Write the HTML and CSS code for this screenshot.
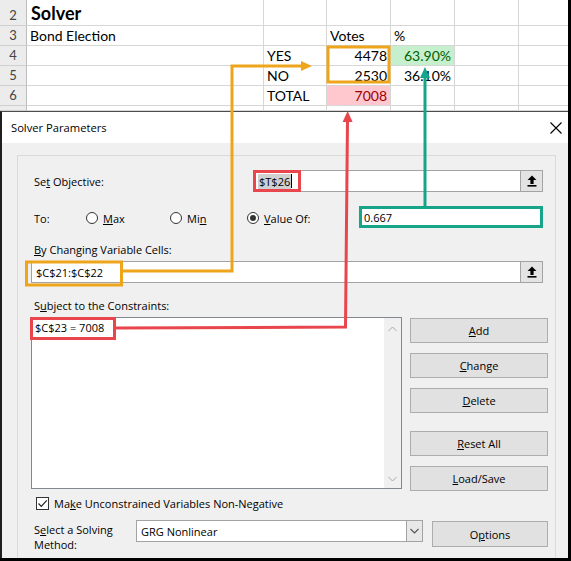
FILE: index.html
```html
<!DOCTYPE html>
<html>
<head>
<meta charset="utf-8">
<title>Solver Parameters</title>
<link rel="stylesheet" href="styles.css">
</head>
<body>
<div class="screen">
  <div class="sheet">
    <div class="hd">2</div><div class="c title">Solver</div><div class="c"></div><div class="c"></div><div class="c"></div><div class="c"></div><div class="c last"></div>
    <div class="hd">3</div><div class="c">Bond Election</div><div class="c"></div><div class="c">Votes</div><div class="c">%</div><div class="c"></div><div class="c last"></div>
    <div class="hd">4</div><div class="c"></div><div class="c">YES</div><div class="c num">4478</div><div class="c num good">63.90%</div><div class="c"></div><div class="c last"></div>
    <div class="hd">5</div><div class="c"></div><div class="c">NO</div><div class="c num">2530</div><div class="c num">36.10%</div><div class="c"></div><div class="c last"></div>
    <div class="hd">6</div><div class="c"></div><div class="c">TOTAL</div><div class="c num bad">7008</div><div class="c"></div><div class="c"></div><div class="c last"></div>
    <div class="hd"></div><div class="c"></div><div class="c"></div><div class="c"></div><div class="c"></div><div class="c"></div><div class="c last"></div>
  </div>

  <div class="dialog">
    <div class="titlebar">
      <span>Solver Parameters</span>
      <svg class="close" width="12" height="12" viewBox="0 0 12 12"><path d="M0.5 0.5 L11.5 11.5 M11.5 0.5 L0.5 11.5" stroke="#000" stroke-width="1.1" fill="none"/></svg>
    </div>
    <div class="body">
      <div class="group">
        <div class="row h22 obj">
          <span class="lbl w222">Se<u>t</u> Objective:</span>
          <div class="field w290"><span class="sel">$T$26</span><span class="caret"></span>
            <span class="pick"><svg width="10" height="12" viewBox="0 0 10 12"><path d="M5 0.5 L9.5 5 L6.6 5 L6.6 9 L3.4 9 L3.4 5 L0.5 5 Z" fill="#000"/><rect x="0.5" y="10" width="9" height="1.6" fill="#000"/></svg></span>
          </div>
        </div>
        <div class="row h22 to">
          <span class="lbl w55 lower">To:</span>
          <span class="opt w84 lower"><span class="radio"></span><span><u>M</u>ax</span></span>
          <span class="opt w77 lower"><span class="radio"></span><span>Mi<u>n</u></span></span>
          <span class="opt w112 lower"><span class="radio on"></span><span><u>V</u>alue Of:</span></span>
          <div class="field w184">0.667</div>
        </div>
        <div class="lbl caption c1"><u>B</u>y Changing Variable Cells:</div>
        <div class="row h22 gap3">
          <div class="field w512">$C$21:$C$22
            <span class="pick"><svg width="10" height="12" viewBox="0 0 10 12"><path d="M5 0.5 L9.5 5 L6.6 5 L6.6 9 L3.4 9 L3.4 5 L0.5 5 Z" fill="#000"/><rect x="0.5" y="10" width="9" height="1.6" fill="#000"/></svg></span>
          </div>
        </div>
        <div class="lbl caption c2">S<u>u</u>bject to the Constraints:</div>
        <div class="lists">
          <div class="listbox">
            <div class="items"><div class="item">$C$23 = 7008</div></div>
            <div class="scroll">
              <svg width="9" height="6" viewBox="0 0 9 6"><polyline points="0.5,5 4.5,1 8.5,5" fill="none" stroke="#a8a8a8" stroke-width="1"/></svg>
              <svg width="9" height="6" viewBox="0 0 9 6"><polyline points="0.5,1 4.5,5 8.5,1" fill="none" stroke="#a8a8a8" stroke-width="1"/></svg>
            </div>
          </div>
          <div class="btns">
            <div class="btn"><span><u>A</u>dd</span></div>
            <div class="btn g10"><span><u>C</u>hange</span></div>
            <div class="btn g10"><span><u>D</u>elete</span></div>
            <div class="btn g18"><span><u>R</u>eset All</span></div>
            <div class="btn g10"><span><u>L</u>oad/Save</span></div>
          </div>
        </div>
        <div class="row check-row">
          <span class="check"><svg width="11" height="11" viewBox="0 0 11 11"><polyline points="1.5,5.5 4.3,8.3 9.8,2.3" fill="none" stroke="#222" stroke-width="1.2"/></svg></span>
          <span>Ma<u>k</u>e Unconstrained Variables Non-Negative</span>
        </div>
        <div class="row method">
          <span class="lbl mlabel">S<u>e</u>lect a Solving<br>Method:</span>
          <div class="dropdown"><span>GRG Nonlinear</span>
            <span class="ddbtn"><svg width="9" height="6" viewBox="0 0 9 6"><polyline points="0.5,1 4.5,5 8.5,1" fill="none" stroke="#555" stroke-width="1.1"/></svg></span>
          </div>
          <div class="btn optbtn"><span>O<u>p</u>tions</span></div>
        </div>
      </div>
    </div>
  </div>

  <svg class="annot" width="571" height="561" viewBox="0 0 571 561">
    <g fill="none" stroke-width="3">
      <rect x="328" y="47" width="61" height="35" stroke="#eea51c"/>
      <rect x="26.5" y="262" width="95" height="23" stroke="#eea51c"/>
      <polyline points="123,271 232,271 232,66 302,66" stroke="#eea51c"/>
      <rect x="254.5" y="171.5" width="45" height="19" stroke="#e8464c"/>
      <rect x="31.5" y="318.5" width="83" height="20" stroke="#e8464c"/>
      <polyline points="116,328 345.5,327 347.5,120" stroke="#e8464c"/>
      <rect x="360.5" y="207.5" width="181" height="19" stroke="#17a589"/>
      <polyline points="425,206 425,76" stroke="#17a589"/>
    </g>
    <polygon points="312,66 301,61 301,71" fill="#eea51c"/>
    <polygon points="347.6,111 342.6,122 352.6,122" fill="#e8464c"/>
    <polygon points="425,67 420,78 430,78" fill="#17a589"/>
  </svg>
</div>
</body>
</html>
```

FILE: styles.css
```css
* { box-sizing: border-box; }
body { margin: 0; background: #fff; }

.screen {
  position: relative;
  width: 571px;
  height: 561px;
  overflow: hidden;
  background: #fff;
  border-right: 3px solid #000;
  border-bottom: 3px solid #000;
  display: flex;
  flex-direction: column;
}

/* spreadsheet */
.sheet {
  display: grid;
  grid-template-columns: 27px 237px 63px 64px 64px 64px 49px;
  grid-template-rows: 26px 20px 20px 20px 20px 5px;
  font-family: Lato, "Liberation Sans", sans-serif;
  font-size: 14px;
  color: #000;
}
.sheet > div {
  border-right: 1px solid #d6d6d6;
  border-bottom: 1px solid #d6d6d6;
  display: flex;
  align-items: flex-end;
  padding: 0 3px 1px 3px;
  line-height: 17px;
  white-space: nowrap;
}
.sheet .hd {
  background: #ececec;
  border-right-color: #bdbdbd;
  border-bottom-color: #cfcfcf;
  justify-content: center;
  color: #444;
  font-size: 13px;
}
.sheet .title { font-weight: 700; font-size: 18px; line-height: 22px; padding-left: 4px; }
.sheet .num { justify-content: flex-end; }
.sheet .good { background: #c6efce; color: #006100; }
.sheet .bad { background: #ffc7ce; color: #9c0006; }
.sheet .last { border-right: none; }

/* dialog */
.dialog {
  flex: 1;
  min-height: 0;
  display: flex;
  flex-direction: column;
  border-top: 1px solid #4d4d4d;
  border-left: 2px solid #1f1f1f;
  font-family: "Open Sans", "Noto Sans", sans-serif;
  font-size: 11px;
  color: #000;
}
.titlebar {
  height: 31px;
  background: #fff;
  display: flex;
  align-items: center;
  justify-content: space-between;
  padding: 0 6px 0 9px;
  font-size: 11.2px;
}
.close { display: block; }
.body {
  flex: 1;
  min-height: 0;
  background: #f0f0f0;
  padding: 12px 12px 0 15px;
  display: flex;
  flex-direction: column;
}
.group {
  flex: 1;
  border: 1px solid #dadada;
  border-bottom: none;
  padding: 14px 6px 0 13px;
  display: flex;
  flex-direction: column;
}

.row { display: flex; align-items: center; }
.h22 { height: 22px; }
.lbl { padding-left: 3px; white-space: nowrap; }
.w222 { width: 222px; }
.w55 { width: 55px; }
.to { margin-top: 14px; }
.lower { position: relative; top: 1px; }
.gap3 { margin-top: 3px; }
.caption { height: 16px; line-height: 16px; }
.c1 { margin-top: 14px; }
.c2 { margin-top: 15px; }

.field {
  height: 22px;
  border: 1px solid #a3a3a3;
  background: #fff;
  display: flex;
  align-items: center;
  padding-left: 4px;
  white-space: nowrap;
}
.w290 { width: 290px; }
.w184 { width: 184px; }
.w512 { width: 512px; }
.sel { background: #d0d0d0; padding: 0 1px; line-height: 15px; }
.caret { width: 1px; height: 14px; background: #000; }
.pick {
  margin: -1px -1px -1px auto;
  width: 23px;
  height: 22px;
  border: 1px solid #a3a3a3;
  background: #e3e3e3;
  display: flex;
  align-items: center;
  justify-content: center;
}
.pick svg { display: block; }

.opt { display: flex; align-items: center; gap: 5px; white-space: nowrap; }
.w84 { width: 84px; }
.w77 { width: 77px; }
.w112 { width: 112px; }
.radio {
  width: 12px;
  height: 12px;
  border: 1px solid #333;
  border-radius: 50%;
  background: #fff;
  display: flex;
  align-items: center;
  justify-content: center;
  flex: none;
}
.radio.on::after {
  content: "";
  width: 6px;
  height: 6px;
  border-radius: 50%;
  background: #333;
}

.lists { display: flex; gap: 8px; margin-top: 3px; align-items: flex-start; }
.listbox {
  width: 371px;
  height: 172px;
  border: 1px solid #828790;
  background: #fff;
  display: flex;
}
.items { flex: 1; padding: 2px 0 0 3px; }
.item { line-height: 16px; }
.scroll {
  width: 17px;
  background: #f0f0f0;
  display: flex;
  flex-direction: column;
  justify-content: space-between;
  align-items: center;
  padding: 8px 0 6px;
}
.scroll svg { display: block; }
.btns { width: 138px; display: flex; flex-direction: column; padding-top: 1px; }
.btn {
  height: 25px;
  border: 1px solid #adadad;
  background: #e1e1e1;
  display: flex;
  align-items: center;
  justify-content: center;
  white-space: nowrap;
}
.g10 { margin-top: 10px; }
.g18 { margin-top: 18px; }

.check-row { margin-top: 5px; height: 14px; gap: 5px; padding-left: 5px; }
.check {
  width: 13px;
  height: 13px;
  border: 1px solid #333;
  background: #fff;
  display: flex;
  align-items: center;
  justify-content: center;
}
.check svg { display: block; }

.method { margin-top: 10px; align-items: flex-start; }
.mlabel { width: 105px; padding-top: 3px; line-height: 14.5px; }
.dropdown {
  width: 287px;
  height: 22px;
  border: 1px solid #a3a3a3;
  background: #fff;
  display: flex;
  align-items: center;
  padding-left: 4px;
}
.ddbtn {
  margin: -1px -1px -1px auto;
  width: 17px;
  height: 22px;
  border: 1px solid #a3a3a3;
  background: #e8e8e8;
  display: flex;
  align-items: center;
  justify-content: center;
}
.optbtn { width: 116px; height: 26px; margin: 1px 0 0 9px; }

.annot { position: absolute; left: 0; top: 0; pointer-events: none; }
```
